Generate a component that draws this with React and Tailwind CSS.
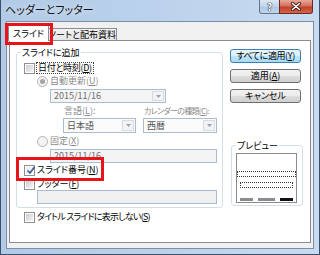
import React from 'react';

function Check({ checked }) {
  return (
    <span className="w-[11px] h-[11px] border border-[#8e8f8f] bg-white p-[1px] flex shrink-0 relative">
      {checked ? (
        <span className="flex-1 bg-[linear-gradient(135deg,#e6ebf2,#fafbfc)]" />
      ) : (
        <span className="flex-1 bg-[linear-gradient(135deg,#c9cdd3,#f4f5f6)]" />
      )}
      {checked && (
        <svg className="absolute left-[1px] top-[0px]" width="10" height="9" viewBox="0 0 10 9">
          <path d="M1.5 4.5 L4 7 L8.5 1" stroke="#3d5a99" strokeWidth="1.7" fill="none" />
        </svg>
      )}
    </span>
  );
}

function Radio({ on }) {
  return (
    <span className="w-[11px] h-[11px] rounded-full border border-[#b4b4b4] bg-[#f3f3f3] flex items-center justify-center shrink-0">
      {on && <span className="w-[5px] h-[5px] rounded-full bg-[#a5a5a5]" />}
    </span>
  );
}

function Arrow() {
  return (
    <span className="w-[12px] my-[1px] mr-[1px] border border-[#d4dbe3] bg-[#f1f3f5] flex items-center justify-center shrink-0">
      <svg width="5" height="3" viewBox="0 0 5 3">
        <path d="M0 0H5L2.5 3Z" fill="#9ca3ab" />
      </svg>
    </span>
  );
}

function Btn({ children, def }) {
  return def ? (
    <div className="w-[71px] h-[14px] rounded-[3px] border border-[#3c7fb1] bg-[linear-gradient(#eaf6fd,#d9f0fc_50%,#bee6fd_51%,#a7d9f5)] flex items-center justify-center leading-[12px] tracking-[-0.4px]">
      {children}
    </div>
  ) : (
    <div className="w-[71px] h-[14px] rounded-[3px] border border-[#707070] bg-[linear-gradient(#f2f2f2,#ebebeb_50%,#dddddd_51%,#cfcfcf)] flex items-center justify-center leading-[12px]">
      {children}
    </div>
  );
}

export default function App() {
  return (
    <div className="w-[320px] h-[255px] relative overflow-hidden whitespace-nowrap flex flex-col border-x border-b border-[#3c5169] bg-[linear-gradient(90deg,#b2cae6,#bcd2ec_50%,#c8dbf0)] font-['Noto_Sans_CJK_JP',sans-serif] [font-feature-settings:'palt'] text-[9px] text-black">
      {/* title bar */}
      <div className="h-[21px] flex items-start shrink-0">
        <div className="pl-[4px] pt-[3px] text-[11px] leading-[13px] text-[#111] [text-shadow:0_0_6px_rgba(255,255,255,0.9)]">
          ヘッダーとフッター
        </div>
        <div className="ml-auto mr-[6px] flex">
          <div className="w-[21px] h-[14px] border border-t-0 border-[#5f7590] rounded-bl-[3px] bg-[linear-gradient(#dbe7f4,#c2d4ea_50%,#aec5e1_51%,#c3d6ec)] flex items-center justify-center text-[10px] leading-[10px] font-bold text-white [text-shadow:0_0_1px_#23364f,0_0_1px_#23364f,0_0_1px_#23364f]">
            ?
          </div>
          <div className="w-[34px] h-[14px] -ml-[1px] border border-t-0 border-[#6b2b22] rounded-br-[3px] bg-[linear-gradient(#e9a99b,#d4705c_45%,#c24129_55%,#d4664c)] flex items-center justify-center">
            <svg width="12" height="9" viewBox="0 0 12 9">
              <path d="M2.5 1.5L9.5 7.5M9.5 1.5L2.5 7.5" stroke="#3b1c17" strokeWidth="3.2" strokeLinecap="round" />
              <path d="M2.5 1.5L9.5 7.5M9.5 1.5L2.5 7.5" stroke="#fff" strokeWidth="1.6" strokeLinecap="round" />
            </svg>
          </div>
        </div>
      </div>

      {/* client */}
      <div className="mx-[5px] h-[228px] shrink-0 border border-[#7b8ea6] bg-[#f0f0f0] flex flex-col pt-[3px] px-[2px] pb-[5px]">
        {/* tabs */}
        <div className="h-[15px] flex items-end relative z-10 shrink-0">
          <div className="w-[41px] h-[16px] -mb-[1px] -ml-[1px] border border-b-0 border-[#898c95] bg-white flex items-center justify-center leading-[12px] relative z-10">
            スライド
          </div>
          <div className="w-[69px] h-[12px] -ml-[1px] border border-b-0 border-[#898c95] bg-[linear-gradient(#f3f3f3,#e6e6e6)] flex items-center justify-center leading-[11px]">
            ノートと配布資料
          </div>
        </div>

        {/* panel */}
        <div className="flex-1 border border-[#898c95] bg-white flex">
          {/* left column */}
          <div className="pl-[6px] pt-[6px] flex flex-col">
            <fieldset className="w-[207px] border border-[#d5dfe5] rounded-[3px] pb-[3px] flex flex-col">
              <legend className="ml-[4px] px-[1px] leading-[11px]">スライドに追加</legend>
              {/* 日付と時刻 */}
              <div className="mt-[4px] h-[12px] pl-[7px] flex items-center gap-[1px]">
                <Check />
                <span className="border border-dotted border-[#444] px-[1px] leading-[10px] tracking-[-0.3px]">
                  日付と時刻(<u>D</u>)
                </span>
              </div>
              {/* 自動更新 */}
              <div className="mt-[1px] h-[12px] pl-[20px] flex items-center gap-[2px] text-[#8a8a8a]">
                <Radio on />
                <span className="leading-[12px]">
                  自動更新(<u>U</u>)
                </span>
              </div>
              {/* date combo */}
              <div className="mt-[2px] ml-[33px] w-[116px] h-[14px] border border-[#a9bcd3] bg-[#f4f4f4] flex">
                <span className="flex-1 pl-[3px] leading-[12px] text-[#6d6d6d]">2015/11/16</span>
                <Arrow />
              </div>
              {/* labels */}
              <div className="mt-[2px] h-[12px] flex items-center text-[#8a8a8a] leading-[12px]">
                <span className="ml-[47px] w-[80px]">
                  言語(<u>L</u>):
                </span>
                <span className="text-[8px] tracking-[-0.7px]">
                  カレンダーの種類(<u>C</u>):
                </span>
              </div>
              {/* combos */}
              <div className="mt-[1px] h-[15px] flex gap-[7px] text-[#555]">
                <div className="ml-[46px] w-[73px] h-[15px] border border-[#a9bcd3] bg-[#fbfbfb] flex">
                  <span className="flex-1 pl-[3px] leading-[13px]">日本語</span>
                  <Arrow />
                </div>
                <div className="w-[74px] h-[15px] border border-[#a9bcd3] bg-[#fbfbfb] flex">
                  <span className="flex-1 pl-[3px] leading-[13px]">西暦</span>
                  <Arrow />
                </div>
              </div>
              {/* 固定 */}
              <div className="mt-[2px] h-[12px] pl-[20px] flex items-center gap-[2px] text-[#8a8a8a]">
                <Radio />
                <span className="leading-[12px]">
                  固定(<u>X</u>)
                </span>
              </div>
              <div className="mt-[2px] ml-[33px] w-[167px] h-[14px] border border-[#a9bcd3] bg-[#f4f4f4] pl-[3px] leading-[12px] text-[#6d6d6d]">
                2015/11/16
              </div>
              {/* スライド番号 */}
              <div className="mt-[1px] h-[12px] pl-[7px] flex items-center gap-[2px]">
                <Check checked />
                <span className="leading-[12px]">
                  スライド番号(<u>N</u>)
                </span>
              </div>
              {/* フッター */}
              <div className="mt-[2px] h-[12px] pl-[7px] flex items-center gap-[2px]">
                <Check />
                <span className="leading-[12px]">
                  フッター(<u>F</u>)
                </span>
              </div>
              <div className="ml-[20px] w-[180px] h-[14px] border border-[#a9bcd3] bg-[#f0f0f0]" />
            </fieldset>
            <div className="mt-[3px] h-[12px] pl-[8px] flex items-center gap-[2px]">
              <Check />
              <span className="leading-[12px] tracking-[-0.8px]">
                タイトル スライドに表示しない(<u>S</u>)
              </span>
            </div>
          </div>

          {/* right column */}
          <div className="ml-[7px] pt-[8px] flex flex-col">
            <div className="flex flex-col gap-[6px]">
              <Btn def>
                すべてに適用(<u>Y</u>)
              </Btn>
              <Btn>
                適用(<u>A</u>)
              </Btn>
              <Btn>キャンセル</Btn>
            </div>
            <fieldset className="mt-[37px] ml-[1px] w-[72px] border border-[#d5dfe5] rounded-[3px] pb-[2px] flex flex-col">
              <legend className="ml-[4px] px-[1px] leading-[11px]">プレビュー</legend>
              <div className="mt-[2px] ml-[4px] w-[61px] h-[50px] border border-[#8a8a8a] bg-white flex flex-col">
                <div className="mt-[17px] h-[6px] border border-dotted border-[#333]" />
                <div className="mt-[5px] mx-[3px] h-[6px] border border-dotted border-[#333] rounded-[1px]" />
                <div className="mt-[10px] px-[3px] flex justify-between">
                  <span className="w-[13px] h-[3px] bg-[#8c8c8c]" />
                  <span className="w-[17px] h-[3px] bg-[#8c8c8c]" />
                  <span className="w-[13px] h-[3px] bg-[#111]" />
                </div>
              </div>
            </fieldset>
          </div>
        </div>
      </div>

      {/* red annotation boxes */}
      <div className="absolute left-[4px] top-[23px] w-[48px] h-[22px] border-[3px] border-[#e8141c] z-20" />
      <div className="absolute left-[15px] top-[157px] w-[88px] h-[24px] border-[3px] border-[#e8141c] z-20" />
    </div>
  );
}
